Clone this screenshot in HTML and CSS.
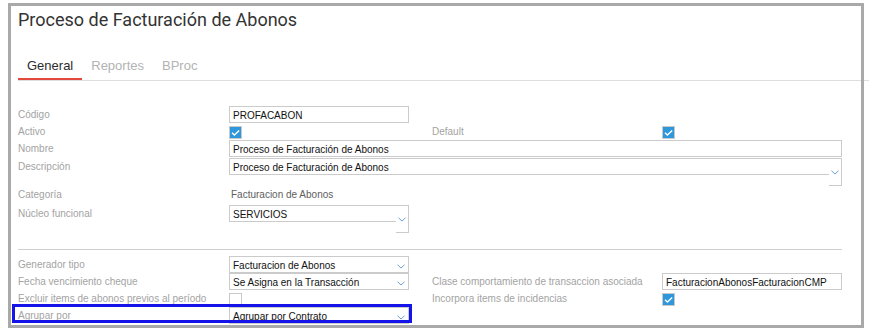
FILE: index.html
```html
<!DOCTYPE html>
<html lang="es">
<head>
<meta charset="utf-8">
<title>Proceso de Facturación de Abonos</title>
<link rel="stylesheet" href="styles.css">
</head>
<body>
<div class="frame">
  <h1 class="title">Proceso de Facturación de Abonos</h1>
  <div class="tabs">
    <div class="tab active">General</div>
    <div class="tab">Reportes</div>
    <div class="tab">BProc</div>
  </div>

  <div class="section first">
    <div class="row">
      <div class="label">Código</div>
      <div class="input">PROFACABON</div>
    </div>
    <div class="row">
      <div class="label">Activo</div>
      <div class="cell"><svg class="check" width="13" height="13" viewBox="0 0 13 13"><rect x="0.5" y="0.5" width="12" height="12" fill="#2f97dc" stroke="#c9c9c9"/><path d="M3 6.8 L5.4 9 L10.2 4.6" fill="none" stroke="#fff" stroke-width="1.4"/></svg></div>
      <div></div>
      <div class="label">Default</div>
      <div class="cell"><svg class="check" width="13" height="13" viewBox="0 0 13 13"><rect x="0.5" y="0.5" width="12" height="12" fill="#2f97dc" stroke="#c9c9c9"/><path d="M3 6.8 L5.4 9 L10.2 4.6" fill="none" stroke="#fff" stroke-width="1.4"/></svg></div>
    </div>
    <div class="row r18">
      <div class="label">Nombre</div>
      <div class="input wide">Proceso de Facturación de Abonos</div>
    </div>
    <div class="row r28">
      <div class="label">Descripción</div>
      <div class="combo wide">
        <div class="combo-text">Proceso de Facturación de Abonos</div>
        <div class="combo-btn"><svg width="8" height="5" viewBox="0 0 8 5"><path d="M0.5 0.8 L4 4 L7.5 0.8" fill="none" stroke="#6e9fd6" stroke-width="1"/></svg></div>
      </div>
    </div>
    <div class="row r19">
      <div class="label">Categoría</div>
      <div class="plain">Facturacion de Abonos</div>
    </div>
    <div class="row r28">
      <div class="label">Núcleo funcional</div>
      <div class="combo">
        <div class="combo-text">SERVICIOS</div>
        <div class="combo-btn"><svg width="8" height="5" viewBox="0 0 8 5"><path d="M0.5 0.8 L4 4 L7.5 0.8" fill="none" stroke="#6e9fd6" stroke-width="1"/></svg></div>
      </div>
    </div>
  </div>

  <div class="divider"></div>

  <div class="section">
    <div class="row">
      <div class="label">Generador tipo</div>
      <div class="select"><span>Facturacion de Abonos</span><svg width="8" height="5" viewBox="0 0 8 5"><path d="M0.5 0.8 L4 4 L7.5 0.8" fill="none" stroke="#6e9fd6" stroke-width="1"/></svg></div>
    </div>
    <div class="row">
      <div class="label">Fecha vencimiento cheque</div>
      <div class="select"><span>Se Asigna en la Transacción</span><svg width="8" height="5" viewBox="0 0 8 5"><path d="M0.5 0.8 L4 4 L7.5 0.8" fill="none" stroke="#6e9fd6" stroke-width="1"/></svg></div>
      <div></div>
      <div class="label">Clase comportamiento de transaccion asociada</div>
      <div class="input">FacturacionAbonosFacturacionCMP</div>
    </div>
    <div class="row">
      <div class="label">Excluir items de abonos previos al período</div>
      <div class="cell"><svg class="check" width="13" height="13" viewBox="0 0 13 13"><rect x="0.5" y="0.5" width="12" height="12" fill="#fff" stroke="#c9c9c9"/></svg></div>
      <div></div>
      <div class="label">Incorpora items de incidencias</div>
      <div class="cell"><svg class="check" width="13" height="13" viewBox="0 0 13 13"><rect x="0.5" y="0.5" width="12" height="12" fill="#2f97dc" stroke="#c9c9c9"/><path d="M3 6.8 L5.4 9 L10.2 4.6" fill="none" stroke="#fff" stroke-width="1.4"/></svg></div>
    </div>
    <div class="row highlighted">
      <div class="label">Agrupar por</div>
      <div class="select"><span>Agrupar por Contrato</span><svg width="8" height="5" viewBox="0 0 8 5"><path d="M0.5 0.8 L4 4 L7.5 0.8" fill="none" stroke="#6e9fd6" stroke-width="1"/></svg></div>
      <div class="highlight"></div>
    </div>
  </div>
</div>
</body>
</html>
```

FILE: styles.css
```css
html, body {
  margin: 0;
  padding: 0;
  background: #fff;
}

body {
  font-family: "Liberation Sans", Arial, sans-serif;
  font-size: 10px;
  color: #111;
}

.frame {
  box-sizing: border-box;
  width: 856px;
  height: 325px;
  margin: 3px 0 0 8px;
  padding: 3px 7px 3px 10px;
  outline: 3px solid #a9a9a9;
  outline-offset: -3px;
}

.title {
  margin: 3px 0 0 0;
  font-family: Roboto, "Liberation Sans", sans-serif;
  font-weight: 400;
  font-size: 18px;
  line-height: 22px;
  color: #333;
}

.tabs {
  display: flex;
  margin-top: 27px;
  margin-right: -15px;
  border-bottom: 1px solid #dedede;
}

.tab {
  padding: 0 9px 5px;
  font-size: 13px;
  line-height: 15px;
  color: #b3b3b3;
  border-bottom: 2px solid transparent;
}

.tab.active {
  color: #2c2c2c;
  border-bottom-color: #e2483b;
}

.section.first {
  margin-top: 25px;
}

.row {
  position: relative;
  display: grid;
  grid-template-columns: 211px 180px 23px 230px 180px;
  align-items: start;
  height: 17px;
}

.row.r18 { height: 18px; }
.row.r19 { height: 19px; }
.row.r28 { height: 28px; }

.label {
  line-height: 18px;
  color: #a3a3a3;
  white-space: nowrap;
}

.input, .select, .combo-text {
  box-sizing: border-box;
  height: 17px;
  border: 1px solid #cbcbcb;
  padding: 1px 3px 0;
  line-height: 15px;
  color: #111;
  white-space: nowrap;
  overflow: hidden;
}

.wide {
  grid-column: 2 / 6;
}

.cell {
  height: 17px;
}

.check {
  display: block;
  margin-top: 3px;
}

.plain {
  line-height: 18px;
  padding-left: 2px;
  color: #5e5e5e;
}

.combo {
  display: flex;
  height: 28px;
}

.combo-text {
  flex: 1;
  border-right: 0;
}

.combo-btn {
  box-sizing: border-box;
  width: 13px;
  height: 28px;
  border: 1px solid #cbcbcb;
  border-left: 0;
  padding: 11px 0 0 2px;
}

.combo-btn svg {
  display: block;
}

.select {
  display: flex;
  align-items: center;
  justify-content: space-between;
  padding-top: 0;
  padding-right: 3px;
}

.select span {
  padding-top: 1px;
}

.select svg {
  display: block;
  margin-top: 3px;
}

.divider {
  margin-top: 16px;
  margin-bottom: 6px;
  height: 1px;
  background: #cfcfcf;
  width: 824px;
}

.highlight {
  position: absolute;
  top: -3px;
  left: -6px;
  box-sizing: border-box;
  width: 400px;
  height: 19px;
  border: 3px solid #1414e8;
}
```
